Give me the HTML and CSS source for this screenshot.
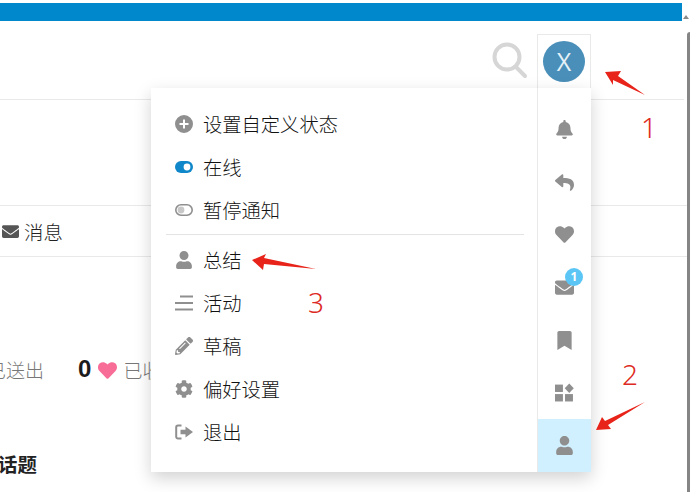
FILE: index.html
```html
<!DOCTYPE html>
<html lang="zh-CN">
<head>
<meta charset="utf-8">
<title>用户菜单</title>
<link rel="stylesheet" href="styles.css">
</head>
<body>
<div class="page">
  <div class="topbar"></div>
  <header class="header">
    <svg class="search" viewBox="0 0 36 38"><circle cx="15" cy="15" r="12.5"/><path d="M24 25l9 9"/></svg>
    <div class="avatar-cell"><div class="avatar">X</div></div>
  </header>
  <nav class="nav">
    <svg class="nav-icon" viewBox="0 0 512 512"><path d="M502.3 190.8c3.9-3.1 9.7-.2 9.7 4.7V400c0 26.5-21.5 48-48 48H48c-26.5 0-48-21.5-48-48V195.6c0-5 5.7-7.8 9.7-4.7 22.4 17.4 52.1 39.5 154.1 113.6 21.1 15.4 56.7 47.8 92.2 47.6 35.7.3 72-32.8 92.3-47.6 102-74.1 131.6-96.3 154-113.7zM256 320c23.2.4 56.6-29.2 73.4-41.4 132.7-96.3 142.8-104.7 173.4-128.7 5.8-4.5 9.2-11.5 9.2-18.9v-19c0-26.5-21.5-48-48-48H48C21.5 64 0 85.5 0 112v19c0 7.4 3.4 14.3 9.2 18.9 30.6 23.9 40.7 32.4 173.4 128.7 16.8 12.2 50.2 41.8 73.4 41.4z"/></svg>
    <span>消息</span>
  </nav>
  <div class="stats">
    <span class="stat-label">已送出</span>
    <b class="stat-num">0</b>
    <svg class="stat-heart" viewBox="0 0 512 512"><path d="M462.3 62.6C407.5 15.9 326 24.3 275.7 76.2L256 96.5l-19.7-20.3C186.1 24.3 104.5 15.9 49.7 62.6c-62.8 53.6-66.1 149.8-9.9 207.9l193.5 199.8c12.5 12.9 32.8 12.9 45.3 0l193.5-199.8c56.3-58.1 53-154.3-9.8-207.9z"/></svg>
    <span class="stat-label">已收到</span>
  </div>
  <h2 class="section-title">话题</h2>

  <div class="menu">
    <div class="menu-main">
      <ul class="menu-list">
        <li class="menu-row">
          <svg class="mi" viewBox="0 0 18 18"><path fill-rule="evenodd" d="M9 0a9 9 0 1 1 0 18A9 9 0 0 1 9 0zM8 4.5v3.5H4.5v2H8v3.5h2V10h3.5V8H10V4.5z"/></svg>
          <span>设置自定义状态</span>
        </li>
        <li class="menu-row">
          <svg class="mi" viewBox="0 0 18 18"><rect class="tog-on" y="3" width="18" height="12" rx="6"/><circle class="tog-knob" cx="12" cy="9" r="3.4"/></svg>
          <span>在线</span>
        </li>
        <li class="menu-row">
          <svg class="mi" viewBox="0 0 18 18"><rect class="tog-off" x=".8" y="3.8" width="16.4" height="10.4" rx="5.2"/><circle cx="6" cy="9" r="3.4" class="tog-dot"/></svg>
          <span>暂停通知</span>
        </li>
      </ul>
      <div class="divider"></div>
      <ul class="menu-list">
        <li class="menu-row">
          <svg class="mi" viewBox="0 0 448 512"><path d="M224 256c70.7 0 128-57.3 128-128S294.7 0 224 0 96 57.3 96 128s57.3 128 128 128zm89.6 32h-16.7c-22.2 10.2-46.9 16-72.9 16s-50.6-5.8-72.9-16h-16.7C60.2 288 0 348.2 0 422.4V464c0 26.5 21.5 48 48 48h352c26.5 0 48-21.5 48-48v-41.6c0-74.2-60.2-134.4-134.4-134.4z"/></svg>
          <span>总结</span>
        </li>
        <li class="menu-row">
          <svg class="mi" viewBox="0 0 18 18"><path class="bars" d="M5 2.500h13M0 9h18M0 15.500h18"/></svg>
          <span>活动</span>
        </li>
        <li class="menu-row">
          <svg class="mi" viewBox="0 0 512 512"><path d="M497.9 142.1l-46.1 46.1c-4.7 4.7-12.3 4.7-17 0l-111-111c-4.7-4.7-4.7-12.3 0-17l46.1-46.1c18.7-18.7 49.1-18.7 67.9 0l60.1 60.1c18.8 18.7 18.8 49.1 0 67.9zM284.2 99.8L21.6 362.4.4 483.9c-2.9 16.4 11.4 30.6 27.8 27.8l121.5-21.3 262.6-262.6c4.7-4.7 4.7-12.3 0-17l-111-111c-4.8-4.7-12.4-4.7-17.1 0zM124.1 339.9c-5.5-5.5-5.5-14.3 0-19.8l154-154c5.5-5.5 14.3-5.5 19.8 0s5.5 14.3 0 19.8l-154 154c-5.5 5.5-14.3 5.5-19.8 0zM88 424h48v36.3l-64.5 11.3-31.1-31.1L51.7 376H88v48z"/></svg>
          <span>草稿</span>
        </li>
        <li class="menu-row">
          <svg class="mi" viewBox="0 0 512 512"><path d="M487.4 315.7l-42.6-24.6c4.3-23.2 4.3-47 0-70.2l42.6-24.6c4.9-2.8 7.1-8.6 5.5-14-11.1-35.6-30-67.8-54.7-94.6-3.8-4.1-10-5.1-14.8-2.3L380.8 110c-17.9-15.4-38.5-27.3-60.8-35.1V25.8c0-5.6-3.9-10.5-9.4-11.7-36.7-8.2-74.3-7.8-109.2 0-5.5 1.2-9.4 6.1-9.4 11.7V75c-22.2 7.9-42.8 19.8-60.8 35.1L88.7 85.5c-4.9-2.8-11-1.9-14.8 2.3-24.7 26.7-43.6 58.9-54.7 94.6-1.7 5.4.6 11.2 5.5 14L67.3 221c-4.3 23.2-4.3 47 0 70.2l-42.6 24.6c-4.9 2.8-7.1 8.6-5.5 14 11.1 35.6 30 67.8 54.7 94.6 3.8 4.1 10 5.1 14.8 2.3l42.6-24.6c17.9 15.4 38.5 27.3 60.8 35.1v49.2c0 5.6 3.9 10.5 9.4 11.7 36.7 8.2 74.3 7.8 109.2 0 5.5-1.2 9.4-6.1 9.4-11.7v-49.2c22.2-7.9 42.8-19.8 60.8-35.1l42.6 24.6c4.9 2.8 11 1.9 14.8-2.3 24.7-26.7 43.6-58.9 54.7-94.6 1.5-5.5-.7-11.3-5.6-14.1zM256 336c-44.1 0-80-35.9-80-80s35.9-80 80-80 80 35.9 80 80-35.9 80-80 80z"/></svg>
          <span>偏好设置</span>
        </li>
        <li class="menu-row">
          <svg class="mi" viewBox="0 0 18 18"><path class="signout" d="M6.500 2.500H3A1.800 1.800 0 0 0 1.200 4.300v9.400A1.800 1.800 0 0 0 3 15.500h3.500"/><path d="M10.500 3.500L18 9l-7.500 5.500V11.300H5.500V6.700h5z"/></svg>
          <span>退出</span>
        </li>
      </ul>
    </div>
    <div class="menu-side">
      <div class="side-btn"><svg class="si" viewBox="0 0 448 512"><path d="M224 512c35.32 0 63.97-28.65 63.97-64H160.03c0 35.35 28.65 64 63.97 64zm215.39-149.71c-19.32-20.76-55.47-51.99-55.47-154.29 0-77.7-54.48-139.9-127.94-155.16V32c0-17.67-14.32-32-31.98-32s-31.98 14.33-31.98 32v20.84C118.56 68.1 64.08 130.3 64.08 208c0 102.3-36.15 133.53-55.47 154.29-6 6.45-8.66 14.16-8.61 21.71.11 16.4 12.98 32 32.1 32h383.8c19.12 0 32-15.6 32.1-32 .05-7.55-2.61-15.27-8.61-21.71z"/></svg></div>
      <div class="side-btn"><svg class="si" viewBox="0 0 512 512"><path d="M8.309 189.836L184.313 37.851C199.719 24.546 224 35.347 224 56.015v80.053c160.629 1.839 288 34.032 288 186.258 0 61.441-39.581 122.309-83.333 154.132-13.653 9.931-33.111-2.533-28.077-18.631 45.344-145.012-21.507-183.51-176.59-185.742V360c0 20.7-24.3 31.453-39.687 18.164l-176.004-152c-11.071-9.562-11.086-26.753 0-36.328z"/></svg></div>
      <div class="side-btn"><svg class="si" viewBox="0 0 512 512"><path d="M462.3 62.6C407.5 15.9 326 24.3 275.7 76.2L256 96.5l-19.7-20.3C186.1 24.3 104.5 15.9 49.7 62.6c-62.8 53.6-66.1 149.8-9.9 207.9l193.5 199.8c12.5 12.9 32.8 12.9 45.3 0l193.5-199.8c56.3-58.1 53-154.3-9.8-207.9z"/></svg></div>
      <div class="side-btn"><svg class="si" viewBox="0 0 512 512"><path d="M502.3 190.8c3.9-3.1 9.7-.2 9.7 4.7V400c0 26.5-21.5 48-48 48H48c-26.5 0-48-21.5-48-48V195.600c0-5 5.700-7.800 9.700-4.700 22.400 17.400 52.100 39.500 154.100 113.600 21.100 15.400 56.700 47.800 92.200 47.600 35.700.3 72-32.800 92.300-47.600 102-74.100 131.600-96.300 154-113.700zM256 320c23.200.4 56.600-29.200 73.400-41.400 132.700-96.300 142.800-104.700 173.400-128.700 5.800-4.500 9.200-11.500 9.200-18.900v-19c0-26.500-21.500-48-48-48H48C21.500 64 0 85.500 0 112v19c0 7.400 3.400 14.300 9.200 18.900 30.600 23.900 40.700 32.400 173.400 128.700 16.800 12.200 50.200 41.800 73.400 41.400z"/></svg><span class="badge">1</span></div>
      <div class="side-btn"><svg class="si" viewBox="0 0 384 512"><path d="M0 512V48C0 21.49 21.49 0 48 0h288c26.51 0 48 21.49 48 48v464L192 400 0 512z"/></svg></div>
      <div class="side-btn"><svg class="si" viewBox="0 0 18 18"><rect x="0" y="1.500" width="7.500" height="7"/><rect x="0" y="10.500" width="7.500" height="7"/><rect x="9.500" y="10.500" width="7.500" height="7"/><path d="M13.500.5l4.300 4.500-4.300 4.500L9.200 5z"/></svg></div>
      <div class="side-btn side-btn-active"><svg class="si" viewBox="0 0 448 512"><path d="M224 256c70.7 0 128-57.3 128-128S294.7 0 224 0 96 57.3 96 128s57.300 128 128 128zm89.600 32h-16.700c-22.200 10.200-46.900 16-72.900 16s-50.600-5.800-72.900-16h-16.700C60.200 288 0 348.200 0 422.400V464c0 26.500 21.500 48 48 48h352c26.500 0 48-21.500 48-48v-41.600c0-74.200-60.200-134.400-134.400-134.400z"/></svg></div>
    </div>
  </div>

  <div class="scroll-arrow"></div>
  <div class="scrollbar"></div>
  <svg class="annotations" viewBox="0 0 690 492">
    <polygon points="605,72 621,71 618,76 645,95 613,80 613,85"/>
    <polygon points="596,430 602,417 605,421 645,402 608,425 611,429"/>
    <polygon points="252,260 266,254 264,258 316,269 264,264 263,270"/>
  </svg>
  <span class="note note-1">1</span>
  <span class="note note-2">2</span>
  <span class="note note-3">3</span>
</div>
</body>
</html>
```

FILE: styles.css
```css
* { box-sizing: border-box; }
html, body { margin: 0; padding: 0; background: #fff; }
body {
  font-family: "Noto Sans CJK SC", "Liberation Sans", sans-serif;
  color: #222;
  overflow: hidden;
}
.page {
  position: relative;
  width: 690px;
  height: 492px;
  overflow: hidden;
  padding-top: 3px;
}
.topbar { width: 682px; height: 18px; background: #0088cc; }

.header {
  display: flex;
  align-items: flex-start;
  justify-content: flex-end;
  height: 79px;
  padding-top: 13px;
  padding-right: 93px;
  border-bottom: 1px solid #e9e9e9;
  margin-right: 6px;
}
.search {
  width: 36px;
  height: 38px;
  margin-top: 8px;
  margin-right: 9px;
  fill: none;
  stroke: #d6d6d6;
  stroke-width: 4;
  stroke-linecap: round;
}
.avatar-cell {
  display: flex;
  justify-content: center;
  width: 54px;
  height: 56px;
  padding-top: 6px;
  border: 1px solid #e9e9e9;
  border-bottom: 0;
  background: #fff;
}
.avatar {
  width: 42px;
  height: 41px;
  border-radius: 50%;
  background: #4a8fb9;
  color: #e6f2f8;
  font: 400 25px/41px "Open Sans", sans-serif;
  text-align: center;
}

.nav {
  display: flex;
  align-items: center;
  gap: 5px;
  height: 52px;
  margin-top: 105px;
  padding-left: 2px;
  border-top: 1px solid #e9e9e9;
  border-bottom: 1px solid #e9e9e9;
  font-size: 19.4px;
  font-weight: 300;
}
.nav-icon { width: 17px; height: 17px; fill: #555; }

.stats {
  display: flex;
  align-items: center;
  height: 28px;
  margin-top: 98px;
  margin-left: -13px;
}
.stat-label { font-size: 19px; font-weight: 300; color: #777; }
.stat-num {
  margin-left: 34px;
  font: 700 24px/28px "Liberation Sans", sans-serif;
  color: #1c1c1c;
}
.stat-heart { width: 19px; height: 19px; margin: 3px 6px 0 7px; fill: #f76d97; }

.section-title {
  margin: 67px 0 0 -2px;
  font-size: 19.4px;
  line-height: 28px;
  font-weight: 700;
  color: #222;
}

.menu {
  position: absolute;
  left: 151px;
  top: 88px;
  display: flex;
  width: 440px;
  height: 384px;
  background: #fff;
  box-shadow: 0 6px 16px rgba(0, 0, 0, 0.18);
}
.menu-main { flex: 1; padding-top: 14px; }
.menu-list { list-style: none; margin: 0; padding: 0; }
.menu-row {
  display: flex;
  align-items: center;
  gap: 10px;
  height: 43px;
  padding-left: 24px;
  font-size: 19.3px;
  font-weight: 300;
  color: #111;
}
.mi { flex: none; width: 18px; height: 18px; fill: #8f8f8f; }
.tog-on { fill: #0f87c9; }
.tog-knob { fill: #fff; }
.tog-off { fill: #fff; stroke: #8f8f8f; stroke-width: 1.6; }
.tog-dot { fill: #c8c8c8; }
.bars { fill: none; stroke: #8f8f8f; stroke-width: 2; }
.signout { fill: none; stroke: #8f8f8f; stroke-width: 2; }
.divider {
  height: 1px;
  margin: 3px 13px 3px 15px;
  background: #e3e3e3;
}
.menu-side {
  display: flex;
  flex-direction: column;
  width: 54px;
  padding-top: 15px;
  border-left: 1px solid #e9e9e9;
}
.side-btn {
  position: relative;
  display: flex;
  flex: 1;
  align-items: center;
  justify-content: center;
}
.si { width: 19px; height: 19px; fill: #8f8f8f; }
.side-btn-active { background: #d1f0ff; }
.badge {
  position: absolute;
  top: 7px;
  left: 27px;
  width: 18px;
  height: 18px;
  border-radius: 50%;
  background: #5bc6f5;
  color: #fff;
  font: 700 12px/18px "Open Sans", sans-serif;
  text-align: center;
}

.scroll-arrow {
  position: absolute;
  right: 1px;
  top: 15px;
  width: 0;
  height: 0;
  border-left: 3px solid transparent;
  border-right: 3px solid transparent;
  border-bottom: 4px solid #8a8a8a;
}
.scrollbar {
  position: absolute;
  right: 0;
  top: 32px;
  bottom: 0;
  width: 3px;
  border-radius: 3px 0 0 0;
  background: #858585;
}
.annotations {
  position: absolute;
  left: 0;
  top: 0;
  width: 690px;
  height: 492px;
  fill: #e8231a;
  pointer-events: none;
}
.note {
  position: absolute;
  font: 300 28px/32px "Noto Sans", sans-serif;
  color: #dd2a22;
}
.note-1 { left: 641px; top: 111px; }
.note-2 { left: 622px; top: 358px; }
.note-3 { left: 308px; top: 286px; }
```
